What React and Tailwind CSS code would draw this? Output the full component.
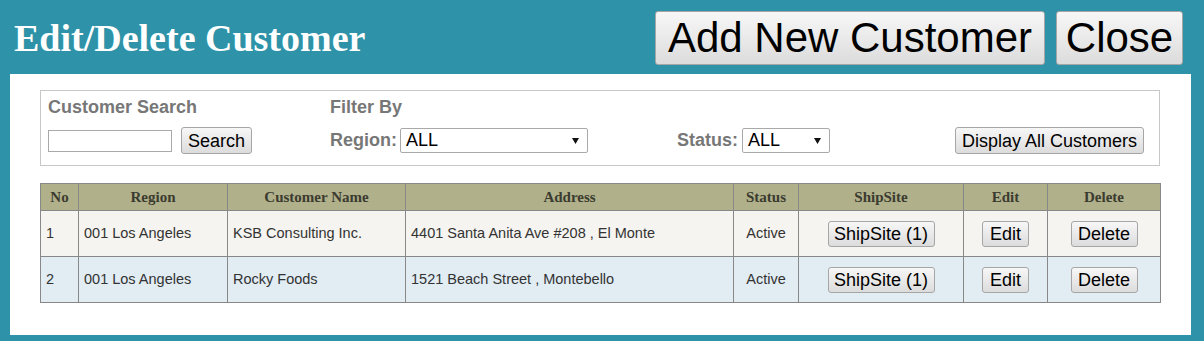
import React from "react";

const sans = "font-['Liberation_Sans',Arial,sans-serif]";
const serif = "font-['Liberation_Serif','Times_New_Roman',serif]";

function Btn({ children, className = "" }) {
  return (
    <button
      className={`${sans} inline-flex items-center justify-center whitespace-nowrap rounded-[3px] border border-[#a6a6a6] bg-gradient-to-b from-[#f7f7f7] to-[#dcdcdc] px-0 font-normal text-black leading-none ${className}`}
    >
      {children}
    </button>
  );
}

function FakeSelect({ width }) {
  return (
    <div
      className={`${sans} flex h-[25px] items-center justify-between rounded-[2px] border border-[#a9a9a9] bg-white pl-[5px] pr-[8px] text-[18px] font-normal text-black ${width}`}
    >
      <span>ALL</span>
      <svg width="7" height="6" viewBox="0 0 7 6">
        <polygon points="0,0 7,0 3.5,6" fill="#111" />
      </svg>
    </div>
  );
}

const rows = [
  {
    no: "1",
    region: "001 Los Angeles",
    name: "KSB Consulting Inc.",
    address: "4401 Santa Anita Ave #208 , El Monte",
    status: "Active",
    bg: "bg-[#f5f4f0]",
  },
  {
    no: "2",
    region: "001 Los Angeles",
    name: "Rocky Foods",
    address: "1521 Beach Street , Montebello",
    status: "Active",
    bg: "bg-[#e1ecf3]",
  },
];

export default function App() {
  const th = `${serif} border border-[#888888] text-center text-[15px] font-bold text-[#3b3b30]`;
  const td = `${sans} border border-[#888888] px-[5px] text-[14.5px] text-[#333333]`;
  return (
    <div className="h-[341px] w-[1204px] bg-[#2e93a8] overflow-hidden">
      <div className="flex h-[74px] items-center justify-between pl-[14px] pr-[21px]">
        <h1 className={`${serif} mt-[2px] text-[38px] font-bold leading-none text-white`}>
          Edit/Delete Customer
        </h1>
        <div className="mt-[2px] flex items-center gap-[11px]">
          <Btn className="h-[54px] w-[390px] text-[42px]">Add New Customer</Btn>
          <Btn className="h-[54px] w-[127px] text-[42px]">Close</Btn>
        </div>
      </div>
      <div className="ml-[10px] h-[261px] w-[1181px] bg-white px-[30px] pt-[16px]">
        <div className="h-[76px] w-[1120px] border border-[#c8c8c8] pl-[7px] pt-[6px]">
          <div className={`${sans} grid grid-cols-[282px_347px_278px_auto] text-[18px] font-bold text-[#777777]`}>
            <div className="h-[21px] leading-[21px]">Customer Search</div>
            <div className="h-[21px] leading-[21px]">Filter By</div>
            <div />
            <div />
            <div className="mt-[9px] flex h-[27px] items-center gap-[9px]">
              <input
                className="h-[22px] w-[124px] border border-[#a9a9a9] bg-white"
                defaultValue=""
              />
              <Btn className="h-[27px] w-[71px] text-[18px]">Search</Btn>
            </div>
            <div className="mt-[9px] flex h-[27px] items-center gap-[3px]">
              <span>Region:</span>
              <FakeSelect width="w-[188px]" />
            </div>
            <div className="mt-[9px] flex h-[27px] items-center gap-[4px]">
              <span>Status:</span>
              <FakeSelect width="w-[88px]" />
            </div>
            <div className="mt-[9px] flex h-[27px] items-center">
              <Btn className="h-[27px] w-[189px] text-[18px]">Display All Customers</Btn>
            </div>
          </div>
        </div>
        <table className="mt-[17px] w-[1120px] table-fixed border-collapse border border-[#888888]">
          <colgroup>
            <col className="w-[38px]" />
            <col className="w-[149px]" />
            <col className="w-[178px]" />
            <col className="w-[328px]" />
            <col className="w-[65px]" />
            <col className="w-[165px]" />
            <col className="w-[84px]" />
            <col className="w-[113px]" />
          </colgroup>
          <thead>
            <tr className="h-[27px] bg-[#b0b08a]">
              <th className={th}>No</th>
              <th className={th}>Region</th>
              <th className={th}>Customer Name</th>
              <th className={th}>Address</th>
              <th className={th}>Status</th>
              <th className={th}>ShipSite</th>
              <th className={th}>Edit</th>
              <th className={th}>Delete</th>
            </tr>
          </thead>
          <tbody>
            {rows.map((r) => (
              <tr key={r.no} className={`h-[46px] ${r.bg}`}>
                <td className={td}>{r.no}</td>
                <td className={td}>{r.region}</td>
                <td className={td}>{r.name}</td>
                <td className={td}>{r.address}</td>
                <td className={`${td} text-center`}>{r.status}</td>
                <td className={`${td} text-center`}>
                  <Btn className="h-[26px] w-[107px] text-[18px]">ShipSite (1)</Btn>
                </td>
                <td className={`${td} text-center`}>
                  <Btn className="h-[26px] w-[47px] text-[18px]">Edit</Btn>
                </td>
                <td className={`${td} text-center`}>
                  <Btn className="h-[26px] w-[67px] text-[18px]">Delete</Btn>
                </td>
              </tr>
            ))}
          </tbody>
        </table>
      </div>
    </div>
  );
}
